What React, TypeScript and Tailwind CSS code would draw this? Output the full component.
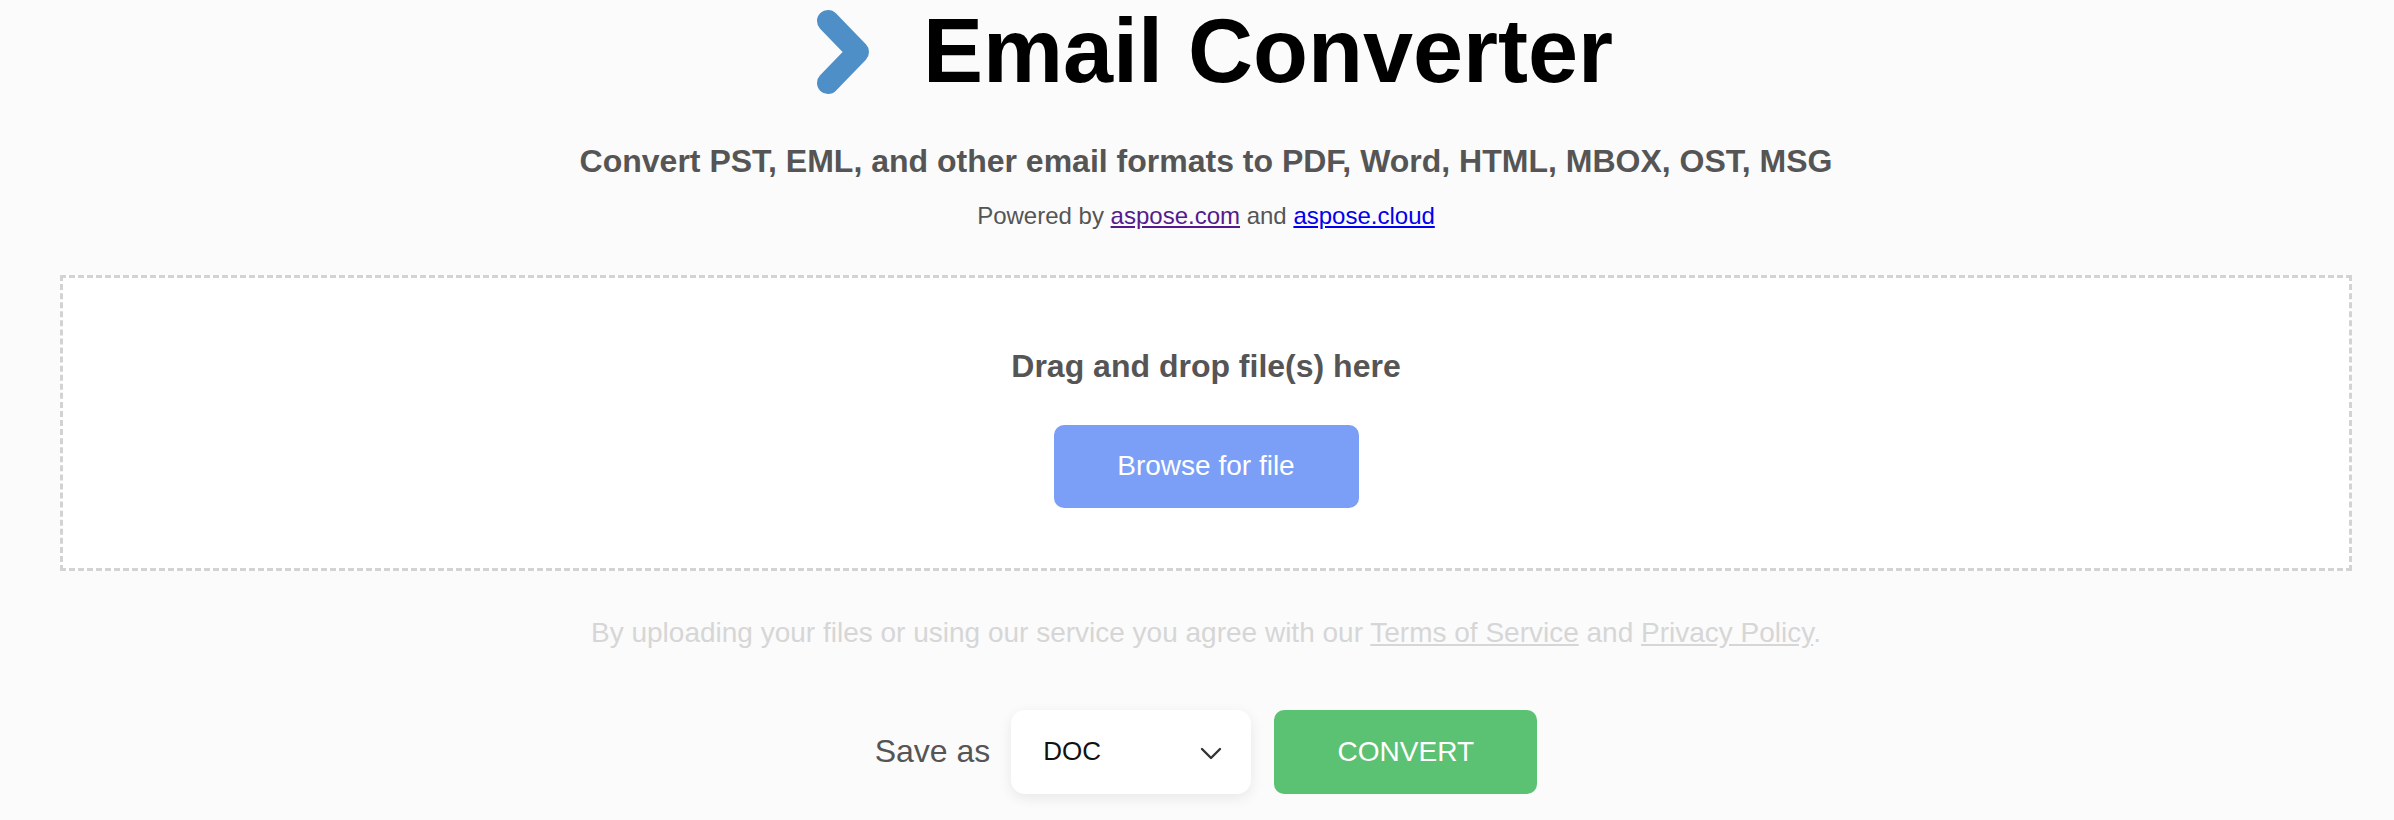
import { useState } from "react";

const FORMATS = ["DOC", "DOCX", "PDF", "HTML", "MBOX", "OST", "MSG", "EML"];

export default function App() {
  const [format, setFormat] = useState("DOC");

  return (
    <main className="min-h-screen bg-[#fbfbfb] font-['Liberation_Sans',Arial,sans-serif] text-[#555]">
      <div className="ml-[60px] flex w-[2292px] flex-col items-center">
        <header className="ml-[16px] flex items-center gap-[52px]">
          <Logo />
          <h1 className="text-[90px] font-bold leading-[1.15] text-black">Email Converter</h1>
        </header>

        <p className="mt-[39px] text-[32px] font-bold leading-[1.15]">
          Convert PST, EML, and other email formats to PDF, Word, HTML, MBOX, OST, MSG
        </p>
        <p className="mt-[23px] text-[24px] leading-[1.15]">
          Powered by{" "}
          <a href="#" className="text-[#551a8b] underline">
            aspose.com
          </a>{" "}
          and{" "}
          <a href="#" className="text-[#0000ee] underline">
            aspose.cloud
          </a>
        </p>

        <section className="mt-[45px] flex w-full flex-col items-center border-[3px] border-dashed border-[#d3d3d3] bg-white pt-[70px] pb-[60px]">
          <h3 className="text-[32px] font-bold leading-[1.15]">Drag and drop file(s) here</h3>
          <button className="mt-[40px] h-[83px] w-[305px] rounded-[10px] bg-[#7b9ff6] text-[28px] leading-[1.15] text-white">
            Browse for file
          </button>
        </section>

        <p className="mt-[46px] text-[28px] leading-[1.15] text-[#d6d6d6]">
          By uploading your files or using our service you agree with our{" "}
          <a href="#" className="underline">
            Terms of Service
          </a>{" "}
          and{" "}
          <a href="#" className="underline">
            Privacy Policy
          </a>
          .
        </p>

        <div className="mt-[61px] flex items-center">
          <span className="text-[32px] leading-[1.15]">Save as</span>
          <label className="relative ml-[21px] flex h-[84px] w-[240px] items-center rounded-[14px] bg-white shadow-[0_4px_14px_rgba(0,0,0,0.08)]">
            <select
              value={format}
              onChange={(e) => setFormat(e.target.value)}
              className="h-full w-full appearance-none rounded-[14px] bg-transparent pl-[32px] text-[26px] text-[#111] outline-none"
            >
              {FORMATS.map((f) => (
                <option key={f}>{f}</option>
              ))}
            </select>
            <svg
              className="pointer-events-none absolute right-[29px] top-[37px]"
              width="22"
              height="13"
              viewBox="0 0 22 13"
              fill="none"
              stroke="#333"
              strokeWidth="2.4"
              strokeLinecap="round"
              strokeLinejoin="round"
            >
              <polyline points="2,2 11,11 20,2" />
            </svg>
          </label>
          <button className="ml-[23px] h-[84px] w-[263px] rounded-[10px] bg-[#5bc173] text-[28px] leading-[1.15] text-white">
            CONVERT
          </button>
        </div>
      </div>
    </main>
  );
}

function Logo() {
  return (
    <svg width="56" height="86" viewBox="0 0 56 86" fill="none">
      <polyline
        points="13,12 43,43 13,74"
        stroke="#4f8fc7"
        strokeWidth="22"
        strokeLinecap="round"
        strokeLinejoin="round"
      />
    </svg>
  );
}
